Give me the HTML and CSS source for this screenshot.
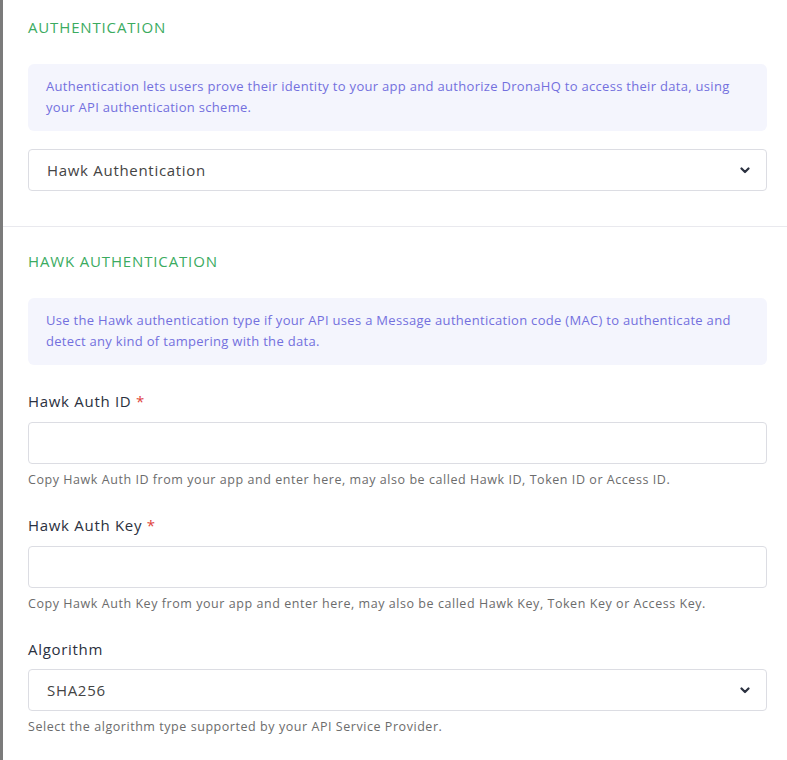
FILE: index.html
```html
<!DOCTYPE html>
<html>
<head>
<meta charset="utf-8">
<link rel="stylesheet" href="styles.css">
</head>
<body>
<div class="page">
  <section class="section first">
    <h2 class="heading">AUTHENTICATION</h2>
    <div class="info">Authentication lets users prove their identity to your app and authorize DronaHQ to access their data, using your API authentication scheme.</div>
    <div class="select">
      <span class="select-value">Hawk Authentication</span>
      <svg class="chev" width="10" height="7" viewBox="0 0 10 7"><path d="M1.5 1.5 L5 5 L8.5 1.5" fill="none" stroke="#2b3140" stroke-width="2.2" stroke-linecap="round" stroke-linejoin="round"/></svg>
    </div>
  </section>
  <section class="section second">
    <h2 class="heading">HAWK AUTHENTICATION</h2>
    <div class="info">Use the Hawk authentication type if your API uses a Message authentication code (MAC) to authenticate and detect any kind of tampering with the data.</div>
    <div class="field">
      <label class="label">Hawk Auth ID <span class="req">*</span></label>
      <div class="input"></div>
      <p class="help">Copy Hawk Auth ID from your app and enter here, may also be called Hawk ID, Token ID or Access ID.</p>
    </div>
    <div class="field">
      <label class="label">Hawk Auth Key <span class="req">*</span></label>
      <div class="input"></div>
      <p class="help">Copy Hawk Auth Key from your app and enter here, may also be called Hawk Key, Token Key or Access Key.</p>
    </div>
    <div class="field">
      <label class="label">Algorithm</label>
      <div class="select">
        <span class="select-value">SHA256</span>
        <svg class="chev" width="10" height="7" viewBox="0 0 10 7"><path d="M1.5 1.5 L5 5 L8.5 1.5" fill="none" stroke="#2b3140" stroke-width="2.2" stroke-linecap="round" stroke-linejoin="round"/></svg>
      </div>
      <p class="help">Select the algorithm type supported by your API Service Provider.</p>
    </div>
  </section>
</div>
</body>
</html>
```
FILE: styles.css
```css
* { box-sizing: border-box; }
html, body { margin: 0; padding: 0; background: #fff; }
body { font-family: "Open Sans", "Liberation Sans", sans-serif; }
.page {
  border-left: 3px solid #7b7b7b;
  min-height: 760px;
}
.section { padding: 0 20px 0 25px; display: flex; flex-direction: column; }
.section.first { padding-top: 17px; padding-bottom: 35px; border-bottom: 1px solid #e9e9ee; }
.section.second { padding-top: 24px; }
.heading {
  margin: 0;
  font-size: 15px;
  line-height: 20px;
  font-weight: 500;
  color: #3bab5f;
  letter-spacing: 0.85px;
}
.info {
  margin-top: 27px;
  background: #f4f5fd;
  border-radius: 6px;
  padding: 12px 18px 13px;
  font-size: 13px;
  line-height: 21px;
  color: #7370de;
  letter-spacing: 0.3px;
}
.select {
  margin-top: 18px;
  height: 42px;
  border: 1px solid #dcdde3;
  border-radius: 4px;
  display: flex;
  align-items: center;
  justify-content: space-between;
  padding: 0 16px 0 18px;
}
.select-value { font-size: 15px; color: #444; letter-spacing: 0.7px; }
.chev { display: block; }
.field { display: flex; flex-direction: column; margin-top: 26px; }
.label { font-size: 15px; line-height: 20px; font-weight: 500; color: #2b3140; letter-spacing: 0.7px; }
.req { color: #e0433d; }
.input {
  margin-top: 11px;
  height: 42px;
  border: 1px solid #dcdde3;
  border-radius: 4px;
}
.field .select { margin-top: 10px; }
.help { margin: 7px 0 0; font-size: 12.5px; line-height: 18px; color: #6c6c6c; letter-spacing: 0.55px; }
```
